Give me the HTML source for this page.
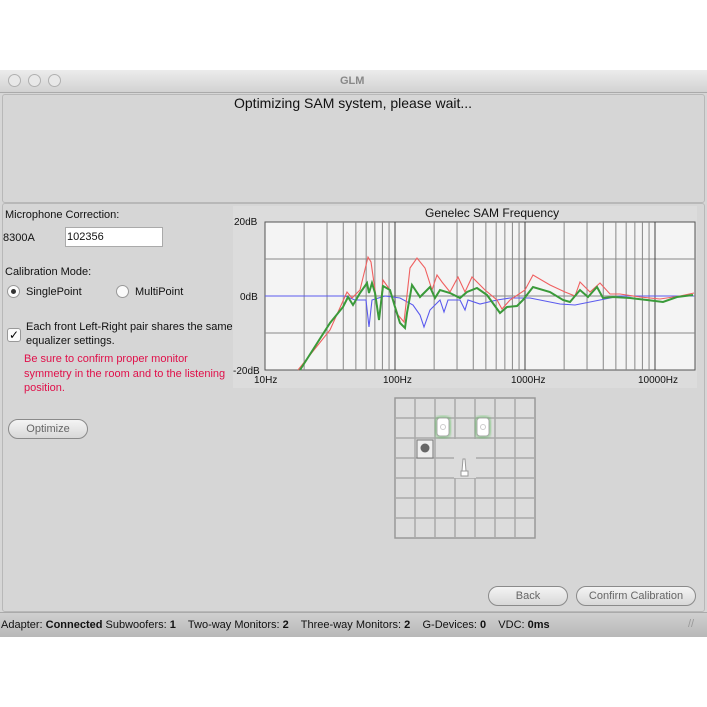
<!DOCTYPE html><html><head><style>
body{margin:0;width:707px;height:707px;background:#fff;position:relative;font-family:"Liberation Sans",sans-serif;overflow:hidden}
.a{position:absolute}
.t{font-size:11px;color:#111;position:absolute;white-space:nowrap}
.btn{position:absolute;height:18px;border:1px solid #8a8a8a;border-radius:10px;background:linear-gradient(#f4f4f4,#d8d8d8);font-size:11px;color:#666;text-align:center;line-height:18px}
</style></head><body>
<div class="a" style="left:0;top:70px;width:707px;height:22px;background:linear-gradient(#ececec,#d2d2d2);border-bottom:1px solid #aaa"></div>
<div class="a" style="left:8px;top:74px;width:11px;height:11px;border-radius:50%;border:1px solid #b0b0b0;background:#e8e8e8"></div>
<div class="a" style="left:28px;top:74px;width:11px;height:11px;border-radius:50%;border:1px solid #b0b0b0;background:#e8e8e8"></div>
<div class="a" style="left:48px;top:74px;width:11px;height:11px;border-radius:50%;border:1px solid #b0b0b0;background:#e8e8e8"></div>
<div class="t" style="left:340px;top:75px;font-weight:bold;color:#888;font-size:11px">GLM</div>
<div class="a" style="left:0;top:93px;width:707px;height:519px;background:#d6d6d6"></div>
<div class="a" style="left:2px;top:94px;width:701px;height:107px;border:1px solid #b8b8b8;border-radius:3px"></div>
<div class="t" style="left:234px;top:95px;font-size:14px">Optimizing SAM system, please wait...</div>
<div class="a" style="left:2px;top:203px;width:701px;height:407px;border:1px solid #b8b8b8;border-radius:3px"></div>
<div class="t" style="left:5px;top:209px">Microphone Correction:</div>
<div class="t" style="left:3px;top:232px">8300A</div>
<div class="a" style="left:65px;top:227px;width:96px;height:18px;background:#fff;border:1px solid #aaa"></div>
<div class="t" style="left:67px;top:231px">102356</div>
<div class="t" style="left:5px;top:266px">Calibration Mode:</div>
<div class="a" style="left:7px;top:285px;width:11px;height:11px;border-radius:50%;border:1px solid #999;background:#fafafa"></div>
<div class="a" style="left:11px;top:289px;width:5px;height:5px;border-radius:50%;background:#333"></div>
<div class="t" style="left:26px;top:286px">SinglePoint</div>
<div class="a" style="left:116px;top:285px;width:11px;height:11px;border-radius:50%;border:1px solid #999;background:#fafafa"></div>
<div class="t" style="left:135px;top:286px">MultiPoint</div>
<div class="a" style="left:7px;top:328px;width:12px;height:12px;border-radius:3px;border:1px solid #999;background:#fafafa;font-size:12px;line-height:12px;text-align:center">✓</div>
<div class="t" style="left:26px;top:321px">Each front Left-Right pair shares the same</div>
<div class="t" style="left:26px;top:335px">equalizer settings.</div>
<div class="t" style="left:24px;top:352px;color:#e0104a;line-height:14.5px">Be sure to confirm proper monitor<br>symmetry in the room and to the listening<br>position.</div>
<div class="btn" style="left:8px;top:419px;width:78px">Optimize</div>
<div class="a" style="left:233px;top:206px;width:464px;height:182px;background:#dcdcdc"></div>
<svg class="a" style="left:230px;top:200px" width="477" height="190" font-family="Liberation Sans" font-size="10">
<text x="195" y="17" font-size="12" fill="#111">Genelec SAM Frequency</text>
<g transform="translate(-230,-200)">
<rect x="265" y="222" width="430" height="148" fill="#f4f4f4" stroke="#555"/>
<g stroke="#888" stroke-width="1">
<line x1="265" x2="695" y1="259" y2="259"/><line x1="265" x2="695" y1="296" y2="296"/><line x1="265" x2="695" y1="333" y2="333"/>
</g>
<g stroke="#888" id="vg"></g>
<polyline fill="none" stroke="#5a5aee" stroke-width="1.1" points="265,296 345,296 355,300 366,300 369,327 372,300 385,296 400,298 413,305 420,315 424,327 430,310 440,300 444,312 448,300 460,300 465,310 468,300 480,304 497,300 510,298 530,298 560,304 575,305 600,300 620,296 694,296"/>
<polyline fill="none" stroke="#f06060" stroke-width="1.1" points="298,370 330,330 347,292 352,298 360,290 368,257 371,262 375,290 379,320 383,280 390,290 398,315 404,322 410,268 417,258 425,268 432,290 437,275 442,282 450,292 458,277 465,292 472,277 485,290 497,300 502,309 510,300 525,290 533,275 550,285 565,292 575,296 580,282 590,292 600,283 610,294 620,294 640,297 660,299 680,296 694,293"/>
<polyline fill="none" stroke="#3a9a3a" stroke-width="2" points="300,370 330,323 343,307 348,297 353,305 360,293 367,283 369,293 372,283 375,293 379,320 383,286 390,290 395,307 400,323 405,328 407,313 412,285 420,297 430,287 435,298 440,290 450,293 460,298 467,292 477,288 487,295 500,313 507,307 517,306 523,300 533,287 550,292 563,300 570,302 580,290 588,297 597,287 603,298 613,297 630,298 647,300 663,302 677,297 693,295"/>
</g>
<text x="4" y="25" fill="#111">20dB</text><text x="10" y="100" fill="#111">0dB</text><text x="3" y="174" fill="#111">-20dB</text>
<text x="24" y="183" fill="#111">10Hz</text><text x="153" y="183" fill="#111">100Hz</text><text x="281" y="183" fill="#111">1000Hz</text><text x="408" y="183" fill="#111">10000Hz</text>
</svg>
<svg class="a" style="left:394px;top:397px" width="144" height="144">
<defs><filter id="bl"><feGaussianBlur stdDeviation="2"/></filter></defs>
<rect x="1" y="1" width="140" height="140" fill="#dcdcdc" stroke="#999" stroke-width="1.5"/>
<g stroke="#aaa" stroke-width="1.5">
<line x1="21" x2="21" y1="1" y2="141"/><line x1="41" x2="41" y1="1" y2="141"/><line x1="61" x2="61" y1="1" y2="141"/><line x1="81" x2="81" y1="1" y2="141"/><line x1="101" x2="101" y1="1" y2="141"/><line x1="121" x2="121" y1="1" y2="141"/>
<line y1="21" y2="21" x1="1" x2="141"/><line y1="41" y2="41" x1="1" x2="141"/><line y1="61" y2="61" x1="1" x2="141"/><line y1="81" y2="81" x1="1" x2="141"/><line y1="101" y2="101" x1="1" x2="141"/><line y1="121" y2="121" x1="1" x2="141"/>
</g>
<rect x="60" y="42" width="22" height="39" fill="#dcdcdc"/>
<rect x="42" y="20" width="14" height="20" rx="4" fill="#4b4" filter="url(#bl)" opacity=".8"/>
<rect x="43" y="21" width="12" height="18" rx="3" fill="#fff" stroke="#aaa"/>
<circle cx="49" cy="30" r="2.5" fill="none" stroke="#ccc"/>
<rect x="82" y="20" width="14" height="20" rx="4" fill="#4b4" filter="url(#bl)" opacity=".8"/>
<rect x="83" y="21" width="12" height="18" rx="3" fill="#fff" stroke="#aaa"/>
<circle cx="89" cy="30" r="2.5" fill="none" stroke="#ccc"/>
<rect x="23" y="43" width="16" height="18" fill="#eee" stroke="#777"/>
<circle cx="31" cy="51" r="4.5" fill="#666"/>
<polygon points="69,62 71,62 72,74 68,74" fill="#fff" stroke="#999"/>
<rect x="67" y="74" width="7" height="5" fill="#fff" stroke="#999"/>
</svg>
<div class="btn" style="left:488px;top:586px;width:78px">Back</div>
<div class="btn" style="left:576px;top:586px;width:118px">Confirm Calibration</div>
<div class="a" style="left:0;top:612px;width:707px;height:24px;background:linear-gradient(#d0d0d0,#b8b8b8);border-top:1px solid #aaa"></div>
<div class="t" style="left:1px;top:619px">Adapter: <b>Connected</b> Subwoofers: <b>1</b> &nbsp;&nbsp; Two-way Monitors: <b>2</b> &nbsp;&nbsp; Three-way Monitors: <b>2</b> &nbsp;&nbsp; G-Devices: <b>0</b> &nbsp;&nbsp; VDC: <b>0ms</b></div>
<div class="t" style="left:688px;top:618px;color:#999">//</div>
<script>
var g=document.getElementById('vg'),s='';
[10,100,1000,10000].forEach(function(d){for(var k=1;k<10;k++){var x=265+130*Math.log10(k*d/10);if(x>694)continue;if(x<=265)continue;s+='<line x1="'+x+'" x2="'+x+'" y1="222" y2="370" stroke="'+(k==1?'#444':'#888')+'"/>';}});
g.innerHTML=s;
</script>
</body></html>
